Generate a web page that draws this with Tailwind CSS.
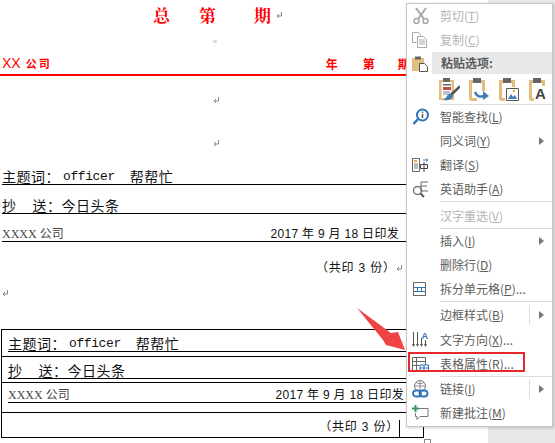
<!DOCTYPE html>
<html lang="zh-CN">
<head>
    <meta charset="UTF-8">
    <title>表格属性</title>
    <script src="https://cdn.jsdelivr.net/npm/@tailwindcss/browser@4"></script>
</head>
<body class="bg-white">
<div class="relative w-[555px] h-[443px] overflow-hidden bg-[#e8e8e8] font-['Liberation_Sans','Noto_Sans_CJK_SC',sans-serif]">

    <!-- document page -->
    <div class="w-[488px] h-[443px] bg-white text-[14px] text-[#111] flex flex-col">
        <div class="h-[29px] flex items-center font-bold text-[#f00] text-[17px] font-['Noto_Serif_CJK_SC','Noto_Sans_CJK_SC',serif]">
            <span class="ml-[153px]">总</span><span class="ml-[29px]">第</span><span class="ml-[38px]">期</span>
            <svg class="ml-[5px]" width="7" height="8" viewBox="0 0 7 8"><path d="M5.500 1v4H1M3 3 1 5l2 2" fill="none" stroke="#888"/></svg>
        </div>
        <div class="h-[24px] flex items-center pl-[213px]"><div class="w-[4px] h-[3px] bg-[#ddd]"></div></div>
        <div class="h-[23px] flex items-center text-[#f00] text-[12px] border-b-2 border-[#f00] font-['Noto_Sans_CJK_SC',sans-serif]">
            <span class="ml-[2px] text-[14px] font-['Liberation_Sans',sans-serif]">XX</span>
            <span class="ml-[5px] font-bold text-[11px] tracking-[2px]">公司</span>
            <span class="ml-[274px] font-bold">年</span><span class="ml-[25px] font-bold">第</span><span class="ml-[23px] font-bold">期</span>
        </div>
        <div class="h-[24px] mt-[12px] flex items-center pl-[213px]">
            <svg width="7" height="8" viewBox="0 0 7 8"><path d="M5.500 1v4H1M3 3 1 5l2 2" fill="none" stroke="#888"/></svg>
        </div>
        <div class="h-[24px] mt-[19px] flex items-center pl-[213px]">
            <svg width="7" height="8" viewBox="0 0 7 8"><path d="M5.500 1v4H1M3 3 1 5l2 2" fill="none" stroke="#888"/></svg>
        </div>

        <div class="h-[30px] ml-[2px] border-b border-black flex items-end leading-[14px] tracking-[0.5px]">
            <span>主题词：</span><span class="font-['Liberation_Mono',monospace] text-[13px] ml-[3px] mr-[15px] tracking-[-0.4px]">officer</span><span>帮帮忙</span>
        </div>
        <div class="h-[29px] ml-[2px] border-b border-black flex items-end leading-[14px] tracking-[0.5px]">
            <span>抄</span><span class="ml-[16px]">送：今日头条</span>
        </div>
        <div class="h-[28px] ml-[2px] border-b border-black flex items-end justify-between pr-[89px] text-[12px] leading-[13px]">
            <span class="font-['Liberation_Serif','Noto_Sans_CJK_SC',serif] text-[#444]">XXXX 公司</span><span class="tracking-[0.3px]">2017 年 9 月 18 日印发</span>
        </div>
        <div class="h-[24px] mt-[12px] flex items-center pl-[316px] text-[12px] tracking-[0.8px] pt-[3px]">
            （共印 3 份）<svg width="7" height="8" viewBox="0 0 7 8"><path d="M5.500 1v4H1M3 3 1 5l2 2" fill="none" stroke="#888"/></svg>
        </div>
        <div class="h-[16px] mt-[7px] flex items-center pl-[2px]">
            <svg width="7" height="8" viewBox="0 0 7 8"><path d="M5.500 1v4H1M3 3 1 5l2 2" fill="none" stroke="#888"/></svg>
        </div>

        <!-- table -->
        <div class="mt-[28px] ml-[1px] w-[423px] h-[109px] border border-black flex flex-col">
            <div class="h-[27px] border-b border-black pl-[6px] shrink-0">
                <div class="h-[22px] border-b border-black flex items-end leading-[14px] tracking-[0.5px]">
                    <span>主题词：</span><span class="font-['Liberation_Mono',monospace] text-[13px] ml-[3px] mr-[15px] tracking-[-0.4px]">officer</span><span>帮帮忙</span>
                </div>
            </div>
            <div class="h-[26px] border-b border-black pl-[6px] shrink-0">
                <div class="h-[22px] border-b border-black flex items-end leading-[14px] tracking-[0.5px]">
                    <span>抄</span><span class="ml-[16px]">送：今日头条</span>
                </div>
            </div>
            <div class="h-[30px] border-b border-black pl-[6px] shrink-0">
                <div class="h-[20px] border-b border-black flex items-end justify-between pr-[19px] text-[12px] leading-[13px]">
                    <span class="font-['Liberation_Serif','Noto_Sans_CJK_SC',serif] text-[#444]">XXXX 公司</span><span class="tracking-[0.3px]">2017 年 9 月 18 日印发</span>
                </div>
            </div>
            <div class="flex-1 flex items-end justify-end text-[12px] tracking-[0.8px] pr-[24px] pb-[1px] relative">
                （共印 3 份）
                <div class="absolute left-[397px] top-[7px] w-[1px] h-[17px] bg-black"></div>
            </div>
        </div>
    </div>

    <!-- arrow -->
    <svg class="absolute left-[350px] top-[300px]" width="60" height="55" viewBox="0 0 60 55">
        <path d="M7 8 41 33 48 32 55 50 36 45 33 40Z" fill="#f04343"/>
    </svg>

    <!-- context menu -->
    <div class="absolute left-[406px] top-[3px] w-[147px] h-[424px] bg-white border border-[#c6c6c6] shadow-[1px_1px_3px_rgba(0,0,0,0.2)] text-[12px] text-[#5c5c5c] font-['Noto_Sans_CJK_SC',sans-serif] flex flex-col">
        <div class="h-[24px] flex items-center text-[#b4b4b4]">
            <div class="w-[33px] pl-[6px] flex">
                <svg width="16" height="18" viewBox="0 0 16 18"><path d="M3 1 11 12M13 1 5 12" stroke="#a8a8a8" stroke-width="2" fill="none"/><circle cx="3.500" cy="14" r="2.500" fill="none" stroke="#a8a8a8" stroke-width="1.500"/><circle cx="12.500" cy="14" r="2.500" fill="none" stroke="#a8a8a8" stroke-width="1.500"/></svg>
            </div>
            <span>剪切(<span class="underline">T</span>)</span>
        </div>
        <div class="h-[24px] flex items-center text-[#b4b4b4]">
            <div class="w-[33px] pl-[5px] flex">
                <svg width="16" height="16" viewBox="0 0 16 16"><path d="M.5.500h6l2 2v2M.5.500v10h4" fill="none" stroke="#aaa"/><path d="M5.500 4.500h6l3 3v8h-9zM7 8h6M7 10h6M7 12h6" fill="#fff" stroke="#aaa"/></svg>
            </div>
            <span>复制(<span class="underline">C</span>)</span>
        </div>
        <div class="h-[22px] flex items-center">
            <div class="w-[25px] pl-[5px] flex">
                <svg width="16" height="17" viewBox="0 0 16 17"><path d="M0 3h12v13H0z" fill="#e3bc7e"/><path d="M3 1.500h6v3H3z" fill="#666"/><path d="M7.500 8.500h5l3 3v5h-8z" fill="#fff" stroke="#555"/></svg>
            </div>
            <div class="flex-1 h-full bg-[#e8e8e8] pl-[9px] flex items-center font-bold">粘贴选项:</div>
        </div>
        <div class="h-[30px] pl-[31px] flex items-center gap-[8px] shrink-0">
            <svg width="22" height="24" viewBox="0 0 22 24"><path d="M1 3h15v20H1z" fill="#e3bc7e"/><path d="M3.500 5h10v16h-10z" fill="#fff"/><path d="M5 1h7v4H5z" fill="#666"/><path d="M5 7h8v1.500H5z" fill="#667"/><path d="M5 10h8v3H5z" fill="#c0504d"/><path d="M5 15h7M5 17h5" stroke="#789"/><path d="M21.500 8 13 16l-1 3 3-1 7-7z" fill="#555"/><path d="M12 16c-3 1-3 5-7 7 4 1 9 0 10-4z" fill="#3f7fb5"/></svg>
            <svg width="22" height="24" viewBox="0 0 22 24"><path d="M2.500 23V4.500h13V14M2.500 22.500H9" fill="none" stroke="#e3bc7e" stroke-width="3"/><path d="M5 1h8v5H5z" fill="#666"/><path d="M7 15c2 5 5 5 10 4" fill="none" stroke="#3f7fb5" stroke-width="2.500"/><path d="M15 14l6 5-6 4z" fill="#3f7fb5"/></svg>
            <svg width="22" height="24" viewBox="0 0 22 24"><path d="M2.500 23V4.500h13V10M2.500 22.500H7" fill="none" stroke="#e3bc7e" stroke-width="3"/><path d="M5 1h8v5H5z" fill="#666"/><path d="M8.500 11.500h12v12h-12z" fill="#fff" stroke="#555"/><path d="M10 22l3-5 2 3 2-2 2 4z" fill="#3f7fb5"/><circle cx="16" cy="14" r="1.200" fill="#e3a83f"/></svg>
            <svg width="22" height="24" viewBox="0 0 22 24"><path d="M2.500 23V4.500h13V9M2.500 22.500H6" fill="none" stroke="#e3bc7e" stroke-width="3"/><path d="M5 1h8v5H5z" fill="#666"/><text x="7" y="22" font-size="15" font-weight="700" fill="#444" font-family="Liberation Sans">A</text></svg>
        </div>
        <div class="h-[1px] ml-[33px] bg-[#dcdcdc] shrink-0"></div>
        <div class="h-[24px] flex items-center">
            <div class="w-[33px] pl-[5px] flex">
                <svg width="18" height="18" viewBox="0 0 18 18"><circle cx="10.500" cy="7" r="5.500" fill="#fff" stroke="#2f75b5" stroke-width="2"/><path d="M6 11 1.500 16" stroke="#2f75b5" stroke-width="2.500"/><path d="M10.500 6v4M10.500 3.500v1.500" stroke="#555" stroke-width="1.500"/></svg>
            </div>
            <span>智能查找(<span class="underline">L</span>)</span>
        </div>
        <div class="h-[24px] flex items-center relative">
            <div class="w-[33px]"></div><span>同义词(<span class="underline">Y</span>)</span>
            <div class="absolute left-[132px] top-[8px] border-l-[5px] border-l-[#777] border-y-[4px] border-y-transparent"></div>
        </div>
        <div class="h-[24px] flex items-center">
            <div class="w-[33px] pl-[5px] flex">
                <svg width="17" height="14" viewBox="0 0 17 14"><path d="M.5.500h7v13h-7z" fill="#fff" stroke="#666"/><path d="M2 3h3" stroke="#e08a2d" stroke-width="1.500"/><path d="M2 6h4M2 8h4M2 10h4" stroke="#777"/><path d="M8.500 6.500h7v4h-7zM12 4v10" fill="none" stroke="#444"/><path d="M11 2h4M14 .5 16 2l-2 1.500" fill="none" stroke="#3f7fb5"/></svg>
            </div>
            <span>翻译(<span class="underline">S</span>)</span>
        </div>
        <div class="h-[24px] flex items-center">
            <div class="w-[33px] pl-[5px] flex">
                <svg width="17" height="17" viewBox="0 0 17 17"><circle cx="5.500" cy="9.500" r="4" fill="none" stroke="#777" stroke-width="1.500"/><path d="M8.500 12.500 12 16" stroke="#555" stroke-width="2"/><path d="M16 1H9v9h7M9 5h6" fill="none" stroke="#666"/></svg>
            </div>
            <span>英语助手(<span class="underline">A</span>)</span>
        </div>
        <div class="h-[1px] ml-[33px] bg-[#dcdcdc] shrink-0"></div>
        <div class="h-[26px] pt-[2px] flex items-center text-[#b4b4b4] shrink-0">
            <div class="w-[33px]"></div><span>汉字重选(<span class="underline">V</span>)</span>
        </div>
        <div class="h-[1px] ml-[33px] bg-[#dcdcdc] shrink-0"></div>
        <div class="h-[24px] flex items-center relative">
            <div class="w-[33px]"></div><span>插入(<span class="underline">I</span>)</span>
            <div class="absolute left-[132px] top-[8px] border-l-[5px] border-l-[#777] border-y-[4px] border-y-transparent"></div>
        </div>
        <div class="h-[24px] flex items-center">
            <div class="w-[33px]"></div><span>删除行(<span class="underline">D</span>)</span>
        </div>
        <div class="h-[24px] flex items-center">
            <div class="w-[33px] pl-[6px] flex">
                <svg width="13" height="14" viewBox="0 0 13 14"><path d="M.5.500h12v13H.5z" fill="#fff" stroke="#666"/><path d="M.5 5.500h12M.5 9.500h12" stroke="#2f75b5"/><path d="M4.500 5.500v4M8.500 5.500v4" stroke="#2f75b5"/></svg>
            </div>
            <span>拆分单元格(<span class="underline">P</span>)...</span>
        </div>
        <div class="h-[1px] ml-[33px] mb-[1px] bg-[#dcdcdc] shrink-0"></div>
        <div class="h-[24px] flex items-center relative">
            <div class="w-[33px]"></div><span>边框样式(<span class="underline">B</span>)</span>
            <div class="absolute left-[122px] top-[2px] w-[1px] h-[20px] bg-[#dcdcdc]"></div>
            <div class="absolute left-[132px] top-[8px] border-l-[5px] border-l-[#777] border-y-[4px] border-y-transparent"></div>
        </div>
        <div class="h-[25px] flex items-center">
            <div class="w-[33px] pl-[5px] flex">
                <svg width="18" height="18" viewBox="0 0 18 18"><path d="M1.500 1v13M5.500 1v13M9.500 7v7" stroke="#555"/><path d="M0 13l1.500 3 1.500-3M4 13l1.500 3 1.500-3M8 13l1.500 3 1.500-3M12 13l1.500 3 1.500-3" fill="#555"/><path d="M13.500 9v5" stroke="#555"/><text x="9.500" y="8" font-size="9" font-weight="700" fill="#2f75b5" font-family="Liberation Sans">A</text></svg>
            </div>
            <span>文字方向(<span class="underline">X</span>)...</span>
        </div>
        <div class="h-[24px] flex items-center">
            <div class="w-[33px] pl-[5px] flex">
                <svg width="17" height="15" viewBox="0 0 17 15"><path d="M.5.500h13v13H.5z" fill="#fff" stroke="#666"/><path d="M.5 4.500h13M.5 8.500h7M4.500 .5v13" stroke="#666"/><path d="M8 8h8.500v6.500H8z" fill="#fff" stroke="#2f75b5"/><path d="M8 11h8.500M12 8v6.500" stroke="#2f75b5"/></svg>
            </div>
            <span>表格属性(<span class="underline">R</span>)...</span>
        </div>
        <div class="h-[1px] ml-[33px] bg-[#dcdcdc] shrink-0"></div>
        <div class="h-[24px] flex items-center relative">
            <div class="w-[33px] pl-[5px] flex">
                <svg width="17" height="18" viewBox="0 0 17 18"><circle cx="8" cy="6" r="5.500" fill="none" stroke="#777"/><path d="M8 .5v11M2.500 6h11M4 2.500c2.500 1.500 5.500 1.500 8 0" fill="none" stroke="#777" stroke-width=".8"/><rect x="1" y="10.500" width="8" height="6" rx="3" fill="#fff" stroke="#2f75b5" stroke-width="1.800"/><rect x="7.500" y="10.500" width="8" height="6" rx="3" fill="none" stroke="#2f75b5" stroke-width="1.800"/></svg>
            </div>
            <span>链接(<span class="underline">I</span>)</span>
            <div class="absolute left-[122px] top-[2px] w-[1px] h-[20px] bg-[#dcdcdc]"></div>
            <div class="absolute left-[132px] top-[8px] border-l-[5px] border-l-[#777] border-y-[4px] border-y-transparent"></div>
        </div>
        <div class="h-[24px] flex items-center">
            <div class="w-[33px] pl-[5px] flex">
                <svg width="17" height="16" viewBox="0 0 17 16"><path d="M6 3.500h10v8H8l-3 3v-3H3.500V8" fill="none" stroke="#777"/><path d="M3.500 0v7M0 3.500h7" stroke="#3a9a5c" stroke-width="2"/></svg>
            </div>
            <span>新建批注(<span class="underline">M</span>)</span>
        </div>
    </div>

    <!-- red highlight box over 表格属性 -->
    <div class="absolute left-[408px] top-[352px] w-[117px] h-[20px] border-[2px] border-[#e8272c]"></div>

    <!-- table handle -->
    <div class="absolute left-[424px] top-[439px] w-[7px] h-[7px] border border-[#888] bg-white"></div>
</div>
</body>
</html>
